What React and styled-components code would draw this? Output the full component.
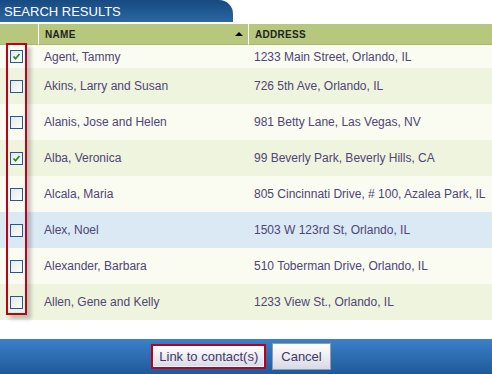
import React from "react";
import styled, { createGlobalStyle } from "styled-components";

const Global = createGlobalStyle`
  html, body { margin: 0; padding: 0; background: #fff; }
  body { font-family: "Liberation Sans", Arial, sans-serif; }
`;

const Page = styled.div`
  width: 492px;
  height: 374px;
  position: relative;
  overflow: hidden;
  display: flex;
  flex-direction: column;
  background: #fff;
`;

const TitleTab = styled.div`
  width: 233px;
  height: 22px;
  box-sizing: border-box;
  padding: 4px 0 0 4px;
  background: linear-gradient(#174a80, #2a66a3);
  border-top-right-radius: 14px;
  color: #fff;
  font-size: 13px;
  line-height: 16px;
  margin-bottom: 2px;
`;

const Grid = styled.div`
  display: grid;
  grid-template-columns: 38px 210px 1fr;
`;

const HeaderCell = styled.div`
  height: 21px;
  box-sizing: border-box;
  background: #b7c87e;
  border-bottom: 1px solid #a6b86c;
  border-left: ${(p) => (p.$sep ? "1px solid #fff" : "none")};
  padding: 0 0 0 6px;
  display: flex;
  align-items: center;
  justify-content: space-between;
  font-size: 10px;
  font-weight: bold;
  letter-spacing: 0.3px;
  color: #222;
`;

const SortArrow = styled.span`
  width: 0;
  height: 0;
  border-left: 4px solid transparent;
  border-right: 4px solid transparent;
  border-bottom: 4px solid #000;
  margin-right: 5px;
`;

const tones = {
  light: "#fafbf1",
  green: "#eff4de",
  blue: "#dae9f4",
};

const Cell = styled.div`
  height: ${(p) => p.$h}px;
  background: ${(p) => tones[p.$tone]};
  display: flex;
  align-items: center;
  padding-left: ${(p) => (p.$check ? "10px" : "6px")};
  font-size: 12px;
  color: #4f4576;
  white-space: nowrap;
  overflow: hidden;
`;

const Box = styled.span`
  width: 13px;
  height: 13px;
  box-sizing: border-box;
  border: 1px solid #255a8e;
  background: linear-gradient(135deg, #e4e7eb, #fdfdfd);
  display: flex;
  align-items: center;
  justify-content: center;
`;

const Highlight = styled.div`
  position: absolute;
  left: 6px;
  top: 43px;
  width: 21px;
  height: 272px;
  box-sizing: border-box;
  border: 2px solid #c0001a;
  box-shadow: 4px 4px 4px rgba(0, 0, 0, 0.22);
  pointer-events: none;
`;

const Spacer = styled.div`
  flex: 1;
`;

const Footer = styled.div`
  height: 35px;
  background: linear-gradient(#3b80c9, #1f5a9a);
  display: flex;
  align-items: center;
  justify-content: center;
  gap: 6px;
  padding-right: 10px;
`;

const Button = styled.button`
  font-family: "Liberation Sans", Arial, sans-serif;
  font-size: 13px;
  color: #3f3869;
  background: linear-gradient(#ffffff, #d9d9e6);
  border: ${(p) => (p.$danger ? "2px solid #c0001a" : "1px solid #8f9bb0")};
  padding: ${(p) => (p.$danger ? "0 6px" : "0 8px")};
  height: ${(p) => (p.$danger ? "25px" : "27px")};
  border-radius: 0;
  box-shadow: ${(p) => (p.$danger ? "inset 0 0 0 1px #fff" : "none")};
  cursor: pointer;
`;

const rows = [
  { name: "Agent, Tammy", addr: "1233 Main Street, Orlando, IL", checked: true, tone: "light", h: 23 },
  { name: "Akins, Larry and Susan", addr: "726 5th Ave, Orlando, IL", tone: "green", h: 36 },
  { name: "Alanis, Jose and Helen", addr: "981 Betty Lane, Las Vegas, NV", tone: "light", h: 36 },
  { name: "Alba, Veronica", addr: "99 Beverly Park, Beverly Hills, CA", checked: true, tone: "green", h: 36 },
  { name: "Alcala, Maria", addr: "805 Cincinnati Drive, # 100, Azalea Park, IL", tone: "light", h: 36 },
  { name: "Alex, Noel", addr: "1503 W 123rd St, Orlando, IL", tone: "blue", h: 36 },
  { name: "Alexander, Barbara", addr: "510 Toberman Drive, Orlando, IL", tone: "light", h: 36 },
  { name: "Allen, Gene and Kelly", addr: "1233 View St., Orlando, IL", tone: "green", h: 36 },
];

function Check({ checked }) {
  return (
    <Box>
      {checked && (
        <svg width="9" height="9" viewBox="0 0 9 9">
          <path d="M1.5 4.5 L3.5 6.8 L7.5 2" fill="none" stroke="#1a8f26" strokeWidth="1.7" />
        </svg>
      )}
    </Box>
  );
}

export default function App() {
  return (
    <Page>
      <Global />
      <TitleTab>SEARCH RESULTS</TitleTab>
      <Grid>
        <HeaderCell />
        <HeaderCell $sep>
          NAME
          <SortArrow />
        </HeaderCell>
        <HeaderCell $sep>ADDRESS</HeaderCell>
        {rows.map((r) => (
          <React.Fragment key={r.name}>
            <Cell $tone={r.tone} $h={r.h} $check>
              <Check checked={r.checked} />
            </Cell>
            <Cell $tone={r.tone} $h={r.h}>{r.name}</Cell>
            <Cell $tone={r.tone} $h={r.h}>{r.addr}</Cell>
          </React.Fragment>
        ))}
      </Grid>
      <Spacer />
      <Footer>
        <Button $danger>Link to contact(s)</Button>
        <Button>Cancel</Button>
      </Footer>
      <Highlight />
    </Page>
  );
}
